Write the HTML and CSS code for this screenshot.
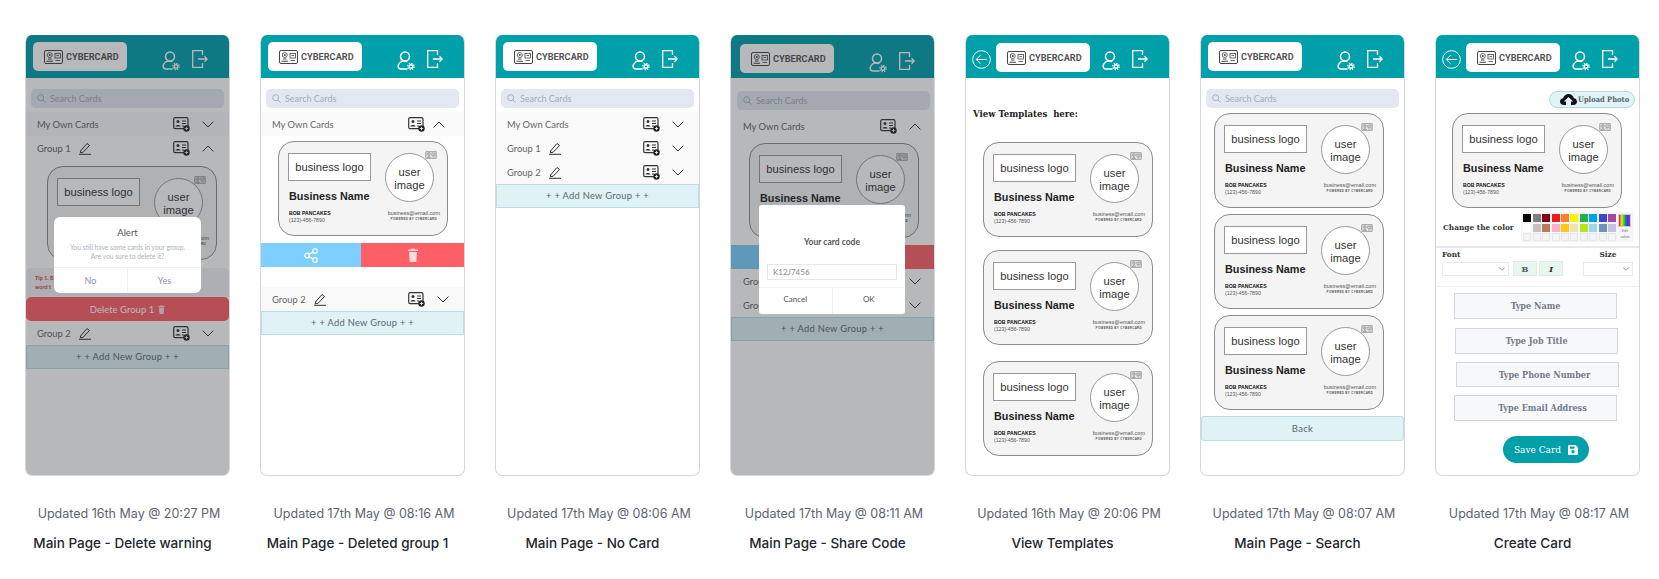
FILE: index.html
```html
<!DOCTYPE html>
<html lang="en">
<head>
    <meta charset="UTF-8">
    <meta name="viewport" content="width=device-width, initial-scale=1.0">
    <title>Cybercard screens</title>
    <link rel="stylesheet" href="styles.css">
</head>
<body>
    <!-- Shared icons -->
    <svg class="sprite" xmlns="http://www.w3.org/2000/svg">
        <symbol id="i-logo" viewBox="0 0 38 28">
            <rect x="1" y="1" width="36" height="26" rx="3" fill="none" stroke="#444" stroke-width="2"/>
            <circle cx="11.5" cy="10" r="5" fill="none" stroke="#444" stroke-width="1.6"/>
            <circle cx="11.5" cy="10" r="2" fill="#444"/>
            <path d="M8 18h7M5 22.500h13" stroke="#444" stroke-width="2" fill="none"/>
            <rect x="22" y="7" width="11" height="9" fill="none" stroke="#444" stroke-width="1.6"/>
            <path d="M25 11h5M23 21h9" stroke="#444" stroke-width="1.6" fill="none"/>
        </symbol>
        <symbol id="i-user" viewBox="0 0 18 20">
            <g fill="none" stroke="#fff" stroke-width="1.5">
                <circle cx="8" cy="5.500" r="4.500"/>
                <path d="M10.500 18H4C2 18 .8 16.500 1.200 14.500 1.800 11.800 4.500 10 7 10c1.300 0 2.400.2 3.300.7"/>
                <circle cx="14" cy="15.500" r="1.800" stroke-width="1.400"/>
                <circle cx="14" cy="15.500" r="3.200" stroke-width="1.300" stroke-dasharray="1.300 1.200"/>
            </g>
        </symbol>
        <symbol id="i-exit" viewBox="0 0 16 18">
            <g fill="none" stroke="#fff" stroke-width="1.300">
                <path d="M10.500 5V.7H.7v16.600h9.800V13"/>
                <path d="M6 9h9M12.500 6.300L15.200 9l-2.700 2.700"/>
            </g>
        </symbol>
        <symbol id="i-add-card" viewBox="0 0 17 15">
            <rect x=".7" y=".7" width="14.300" height="11" rx="1.500" fill="none" stroke="#333" stroke-width="1.200"/>
            <circle cx="5" cy="4.500" r="1.500" fill="#333"/>
            <path d="M2.500 9.500c0-2 5-2 5 0z" fill="#333"/>
            <path d="M9 4h4M9 6.500h4M9 9h2" stroke="#333" stroke-width="1"/>
            <circle cx="13.500" cy="11.500" r="3.200" fill="#222"/>
            <path d="M13.500 9.800v3.400M11.800 11.500h3.400" stroke="#fff" stroke-width=".8"/>
        </symbol>
        <symbol id="i-down" viewBox="0 0 12 7">
            <path d="M.6.600L6 6l5.400-5.400" fill="none" stroke="#333" stroke-width="1"/>
        </symbol>
        <symbol id="i-up" viewBox="0 0 12 7">
            <path d="M.6 6.400L6 1l5.400 5.400" fill="none" stroke="#333" stroke-width="1"/>
        </symbol>
        <symbol id="i-pencil" viewBox="0 0 12 13">
            <path d="M1.500 9L8 1.500l2.500 2L4.200 10.200 1.300 10.800z" fill="none" stroke="#333" stroke-width="1"/>
            <path d="M0 12.300h12" stroke="#333" stroke-width="1"/>
        </symbol>
        <symbol id="i-search" viewBox="0 0 9 9">
            <circle cx="3.700" cy="3.700" r="3" fill="none" stroke="#a3abb8" stroke-width=".9"/>
            <path d="M6 6l2.600 2.600" stroke="#a3abb8" stroke-width=".9"/>
        </symbol>
        <symbol id="i-share" viewBox="0 0 14 15">
            <g fill="none" stroke="#fff" stroke-width="1.200">
                <circle cx="11" cy="3" r="2.300"/>
                <circle cx="3" cy="7.500" r="2.300"/>
                <circle cx="11" cy="12" r="2.300"/>
                <path d="M5 6.400l4-2.300M5 8.600l4 2.300"/>
            </g>
        </symbol>
        <symbol id="i-trash" viewBox="0 0 10 14">
            <path d="M3.500 1.500V.5h3v1H10v1.500H0V1.500zM1 4h8l-.7 10H1.700z" fill="#ffd9dc"/>
        </symbol>
        <symbol id="i-back" viewBox="0 0 20 20">
            <g fill="none" stroke="#fff" stroke-width="1">
                <circle cx="10" cy="10" r="9.300"/>
                <path d="M15.500 10H4.500M9 5.500L4.500 10 9 14.500"/>
            </g>
        </symbol>
        <symbol id="i-cloud" viewBox="0 0 17 11">
            <path d="M4 11C1.500 11 0 9.500 0 7.500 0 5.500 1.500 4.300 3.200 4.200 3.800 1.700 6 0 8.500 0c2.700 0 4.800 1.800 5.300 4.200C15.700 4.400 17 5.800 17 7.700 17 9.600 15.500 11 13.500 11h-2.500V7.500h2.200L8.500 3 3.800 7.500H6V11z" fill="#111"/>
        </symbol>
        <symbol id="i-save" viewBox="0 0 10 10">
            <path d="M0 1a1 1 0 011-1h6.500L10 2.500V9a1 1 0 01-1 1H1a1 1 0 01-1-1zM2 1.500v2.200h4.500V1.500zM5 5a1.700 1.700 0 100 3.400A1.700 1.700 0 005 5z" fill="#fff" fill-rule="evenodd"/>
        </symbol>
    </svg>

    <main class="board">

        <!-- Main Page - Delete warning -->
        <section class="shot">
            <div class="phone">
                <header class="topbar">
                    <div class="brand"><svg class="brand-icon"><use href="#i-logo"/></svg><span>CYBERCARD</span></div>
                    <div class="top-icons top-icons-wide">
                        <svg class="icon-user"><use href="#i-user"/></svg>
                        <svg class="icon-exit"><use href="#i-exit"/></svg>
                    </div>
                </header>
                <div class="search"><svg class="icon-search"><use href="#i-search"/></svg>Search Cards</div>
                <div class="row row-shade">
                    <span>My Own Cards</span>
                    <svg class="icon-add"><use href="#i-add-card"/></svg>
                    <svg class="icon-chevron"><use href="#i-down"/></svg>
                </div>
                <div class="row">
                    <span>Group 1</span><svg class="icon-pencil"><use href="#i-pencil"/></svg>
                    <svg class="icon-add"><use href="#i-add-card"/></svg>
                    <svg class="icon-chevron"><use href="#i-up"/></svg>
                </div>
                <div class="card card-group">
                    <div class="card-qr"><svg><use href="#i-logo"/></svg></div>
                    <div class="card-top">
                        <div>
                            <div class="card-logo">business logo</div>
                            <div class="card-name">Business Name</div>
                        </div>
                        <div class="card-photo">user<br>image</div>
                    </div>
                    <div class="card-foot">
                        <div><b>BOB PANCAKES</b><br>(123)-456-7890</div>
                        <div class="card-foot-right">business@email.com<br><small>POWERED BY CYBERCARD</small></div>
                    </div>
                </div>
                <div class="tip">Tip 1. B<br>word t</div>
                <div class="delete-group">Delete Group 1 <svg class="icon-trash-small"><use href="#i-trash"/></svg></div>
                <div class="row">
                    <span>Group 2</span><svg class="icon-pencil"><use href="#i-pencil"/></svg>
                    <svg class="icon-add"><use href="#i-add-card"/></svg>
                    <svg class="icon-chevron"><use href="#i-down"/></svg>
                </div>
                <div class="add-group">+ + Add New Group + +</div>
                <div class="dim"></div>
                <div class="dialog dialog-alert">
                    <div class="dialog-body">
                        <h3>Alert</h3>
                        <p>You still have some cards in your group.<br>Are you sure to delete it?</p>
                    </div>
                    <div class="dialog-actions"><span>No</span><span>Yes</span></div>
                </div>
            </div>
            <p class="updated">Updated 16th May @ 20:27 PM</p>
            <p class="name">Main Page - Delete warning</p>
        </section>

        <!-- Main Page - Deleted group 1 -->
        <section class="shot">
            <div class="phone">
                <header class="topbar">
                    <div class="brand"><svg class="brand-icon"><use href="#i-logo"/></svg><span>CYBERCARD</span></div>
                    <div class="top-icons top-icons-wide">
                        <svg class="icon-user"><use href="#i-user"/></svg>
                        <svg class="icon-exit"><use href="#i-exit"/></svg>
                    </div>
                </header>
                <div class="search"><svg class="icon-search"><use href="#i-search"/></svg>Search Cards</div>
                <div class="row row-shade row-tight">
                    <span>My Own Cards</span>
                    <svg class="icon-add"><use href="#i-add-card"/></svg>
                    <svg class="icon-chevron"><use href="#i-up"/></svg>
                </div>
                <div class="card card-own">
                    <div class="card-qr"><svg><use href="#i-logo"/></svg></div>
                    <div class="card-top">
                        <div>
                            <div class="card-logo">business logo</div>
                            <div class="card-name">Business Name</div>
                        </div>
                        <div class="card-photo">user<br>image</div>
                    </div>
                    <div class="card-foot">
                        <div><b>BOB PANCAKES</b><br>(123)-456-7890</div>
                        <div class="card-foot-right">business@email.com<br><small>POWERED BY CYBERCARD</small></div>
                    </div>
                </div>
                <div class="card-actions">
                    <div class="action-share"><svg class="icon-share"><use href="#i-share"/></svg></div>
                    <div class="action-delete"><svg class="icon-trash"><use href="#i-trash"/></svg></div>
                </div>
                <div class="row row-shade row-spaced">
                    <span>Group 2</span><svg class="icon-pencil"><use href="#i-pencil"/></svg>
                    <svg class="icon-add"><use href="#i-add-card"/></svg>
                    <svg class="icon-chevron"><use href="#i-down"/></svg>
                </div>
                <div class="add-group">+ + Add New Group + +</div>
            </div>
            <p class="updated">Updated 17th May @ 08:16 AM</p>
            <p class="name">Main Page - Deleted group 1</p>
        </section>

        <!-- Main Page - No Card -->
        <section class="shot">
            <div class="phone">
                <header class="topbar">
                    <div class="brand"><svg class="brand-icon"><use href="#i-logo"/></svg><span>CYBERCARD</span></div>
                    <div class="top-icons top-icons-wide">
                        <svg class="icon-user"><use href="#i-user"/></svg>
                        <svg class="icon-exit"><use href="#i-exit"/></svg>
                    </div>
                </header>
                <div class="search"><svg class="icon-search"><use href="#i-search"/></svg>Search Cards</div>
                <div class="row row-shade">
                    <span>My Own Cards</span>
                    <svg class="icon-add"><use href="#i-add-card"/></svg>
                    <svg class="icon-chevron"><use href="#i-down"/></svg>
                </div>
                <div class="row row-shade">
                    <span>Group 1</span><svg class="icon-pencil"><use href="#i-pencil"/></svg>
                    <svg class="icon-add"><use href="#i-add-card"/></svg>
                    <svg class="icon-chevron"><use href="#i-down"/></svg>
                </div>
                <div class="row row-shade">
                    <span>Group 2</span><svg class="icon-pencil"><use href="#i-pencil"/></svg>
                    <svg class="icon-add"><use href="#i-add-card"/></svg>
                    <svg class="icon-chevron"><use href="#i-down"/></svg>
                </div>
                <div class="add-group">+ + Add New Group + +</div>
            </div>
            <p class="updated">Updated 17th May @ 08:06 AM</p>
            <p class="name">Main Page - No Card</p>
        </section>

        <!-- Main Page - Share Code -->
        <section class="shot">
            <div class="phone phone-share">
                <header class="topbar">
                    <div class="brand"><svg class="brand-icon"><use href="#i-logo"/></svg><span>CYBERCARD</span></div>
                    <div class="top-icons top-icons-wide">
                        <svg class="icon-user"><use href="#i-user"/></svg>
                        <svg class="icon-exit"><use href="#i-exit"/></svg>
                    </div>
                </header>
                <div class="search"><svg class="icon-search"><use href="#i-search"/></svg>Search Cards</div>
                <div class="row">
                    <span>My Own Cards</span>
                    <svg class="icon-add"><use href="#i-add-card"/></svg>
                    <svg class="icon-chevron"><use href="#i-up"/></svg>
                </div>
                <div class="card card-own">
                    <div class="card-qr"><svg><use href="#i-logo"/></svg></div>
                    <div class="card-top">
                        <div>
                            <div class="card-logo">business logo</div>
                            <div class="card-name">Business Name</div>
                        </div>
                        <div class="card-photo">user<br>image</div>
                    </div>
                    <div class="card-foot">
                        <div><b>BOB PANCAKES</b><br>(123)-456-7890</div>
                        <div class="card-foot-right">business@email.com<br><small>POWERED BY CYBERCARD</small></div>
                    </div>
                </div>
                <div class="card-actions">
                    <div class="action-share"><svg class="icon-share"><use href="#i-share"/></svg></div>
                    <div class="action-delete"><svg class="icon-trash"><use href="#i-trash"/></svg></div>
                </div>
                <div class="row">
                    <span>Group 1</span><svg class="icon-pencil"><use href="#i-pencil"/></svg>
                    <svg class="icon-add"><use href="#i-add-card"/></svg>
                    <svg class="icon-chevron"><use href="#i-down"/></svg>
                </div>
                <div class="row">
                    <span>Group 2</span><svg class="icon-pencil"><use href="#i-pencil"/></svg>
                    <svg class="icon-add"><use href="#i-add-card"/></svg>
                    <svg class="icon-chevron"><use href="#i-down"/></svg>
                </div>
                <div class="add-group">+ + Add New Group + +</div>
                <div class="dim"></div>
                <div class="dialog dialog-code">
                    <div class="dialog-body">
                        <h4>Your card code</h4>
                        <div class="code-field">K12J7456</div>
                    </div>
                    <div class="dialog-actions"><span>Cancel</span><span>OK</span></div>
                </div>
            </div>
            <p class="updated">Updated 17th May @ 08:11 AM</p>
            <p class="name">Main Page - Share Code</p>
        </section>

        <!-- View Templates -->
        <section class="shot">
            <div class="phone">
                <header class="topbar">
                    <svg class="icon-back"><use href="#i-back"/></svg>
                    <div class="brand"><svg class="brand-icon"><use href="#i-logo"/></svg><span>CYBERCARD</span></div>
                    <div class="top-icons">
                        <svg class="icon-user"><use href="#i-user"/></svg>
                        <svg class="icon-exit"><use href="#i-exit"/></svg>
                    </div>
                </header>
                <h2 class="templates-title">View Templates&nbsp; here:</h2>
                <div class="template-list">
                    <div class="card">
                        <div class="card-qr"><svg><use href="#i-logo"/></svg></div>
                        <div class="card-top">
                            <div>
                                <div class="card-logo">business logo</div>
                                <div class="card-name">Business Name</div>
                            </div>
                            <div class="card-photo">user<br>image</div>
                        </div>
                        <div class="card-foot">
                            <div><b>BOB PANCAKES</b><br>(123)-456-7890</div>
                            <div class="card-foot-right">business@email.com<br><small>POWERED BY CYBERCARD</small></div>
                        </div>
                    </div>
                    <div class="card">
                        <div class="card-qr"><svg><use href="#i-logo"/></svg></div>
                        <div class="card-top">
                            <div>
                                <div class="card-logo">business logo</div>
                                <div class="card-name">Business Name</div>
                            </div>
                            <div class="card-photo">user<br>image</div>
                        </div>
                        <div class="card-foot">
                            <div><b>BOB PANCAKES</b><br>(123)-456-7890</div>
                            <div class="card-foot-right">business@email.com<br><small>POWERED BY CYBERCARD</small></div>
                        </div>
                    </div>
                    <div class="card">
                        <div class="card-qr"><svg><use href="#i-logo"/></svg></div>
                        <div class="card-top">
                            <div>
                                <div class="card-logo">business logo</div>
                                <div class="card-name">Business Name</div>
                            </div>
                            <div class="card-photo">user<br>image</div>
                        </div>
                        <div class="card-foot">
                            <div><b>BOB PANCAKES</b><br>(123)-456-7890</div>
                            <div class="card-foot-right">business@email.com<br><small>POWERED BY CYBERCARD</small></div>
                        </div>
                    </div>
                </div>
            </div>
            <p class="updated">Updated 16th May @ 20:06 PM</p>
            <p class="name">View Templates</p>
        </section>

        <!-- Main Page - Search -->
        <section class="shot">
            <div class="phone">
                <header class="topbar">
                    <div class="brand"><svg class="brand-icon"><use href="#i-logo"/></svg><span>CYBERCARD</span></div>
                    <div class="top-icons top-icons-wide">
                        <svg class="icon-user"><use href="#i-user"/></svg>
                        <svg class="icon-exit"><use href="#i-exit"/></svg>
                    </div>
                </header>
                <div class="search search-results"><svg class="icon-search"><use href="#i-search"/></svg>Search Cards</div>
                <div class="result-list">
                    <div class="card">
                        <div class="card-qr"><svg><use href="#i-logo"/></svg></div>
                        <div class="card-top">
                            <div>
                                <div class="card-logo">business logo</div>
                                <div class="card-name">Business Name</div>
                            </div>
                            <div class="card-photo">user<br>image</div>
                        </div>
                        <div class="card-foot">
                            <div><b>BOB PANCAKES</b><br>(123)-456-7890</div>
                            <div class="card-foot-right">business@email.com<br><small>POWERED BY CYBERCARD</small></div>
                        </div>
                    </div>
                    <div class="card">
                        <div class="card-qr"><svg><use href="#i-logo"/></svg></div>
                        <div class="card-top">
                            <div>
                                <div class="card-logo">business logo</div>
                                <div class="card-name">Business Name</div>
                            </div>
                            <div class="card-photo">user<br>image</div>
                        </div>
                        <div class="card-foot">
                            <div><b>BOB PANCAKES</b><br>(123)-456-7890</div>
                            <div class="card-foot-right">business@email.com<br><small>POWERED BY CYBERCARD</small></div>
                        </div>
                    </div>
                    <div class="card">
                        <div class="card-qr"><svg><use href="#i-logo"/></svg></div>
                        <div class="card-top">
                            <div>
                                <div class="card-logo">business logo</div>
                                <div class="card-name">Business Name</div>
                            </div>
                            <div class="card-photo">user<br>image</div>
                        </div>
                        <div class="card-foot">
                            <div><b>BOB PANCAKES</b><br>(123)-456-7890</div>
                            <div class="card-foot-right">business@email.com<br><small>POWERED BY CYBERCARD</small></div>
                        </div>
                    </div>
                </div>
                <div class="back-btn">Back</div>
            </div>
            <p class="updated">Updated 17th May @ 08:07 AM</p>
            <p class="name">Main Page - Search</p>
        </section>

        <!-- Create Card -->
        <section class="shot">
            <div class="phone">
                <header class="topbar">
                    <svg class="icon-back"><use href="#i-back"/></svg>
                    <div class="brand"><svg class="brand-icon"><use href="#i-logo"/></svg><span>CYBERCARD</span></div>
                    <div class="top-icons">
                        <svg class="icon-user"><use href="#i-user"/></svg>
                        <svg class="icon-exit"><use href="#i-exit"/></svg>
                    </div>
                </header>
                <div class="upload-wrap">
                    <div class="upload"><svg class="icon-cloud"><use href="#i-cloud"/></svg>Upload Photo</div>
                </div>
                <div class="card card-create">
                    <div class="card-qr"><svg><use href="#i-logo"/></svg></div>
                    <div class="card-top">
                        <div>
                            <div class="card-logo">business logo</div>
                            <div class="card-name">Business Name</div>
                        </div>
                        <div class="card-photo">user<br>image</div>
                    </div>
                    <div class="card-foot">
                        <div><b>BOB PANCAKES</b><br>(123)-456-7890</div>
                        <div class="card-foot-right">business@email.com<br><small>POWERED BY CYBERCARD</small></div>
                    </div>
                </div>
                <div class="color-row">
                    <span class="slab-label">Change the color</span>
                    <div class="palette">
                        <div class="swatches">
                            <span></span><span></span><span></span><span></span><span></span><span></span><span></span><span></span><span></span><span></span>
                            <span></span><span></span><span></span><span></span><span></span><span></span><span></span><span></span><span></span><span></span>
                            <span></span><span></span><span></span><span></span><span></span><span></span><span></span><span></span><span></span><span></span>
                        </div>
                        <div class="edit-colors"><i></i>Edit<br>colors</div>
                    </div>
                </div>
                <div class="font-row">
                    <div class="font-col">
                        <span class="slab-label">Font</span>
                        <div class="select select-font"><svg class="icon-select"><use href="#i-down"/></svg></div>
                    </div>
                    <div class="style-btn">B</div>
                    <div class="style-btn style-btn-italic">I</div>
                    <div class="font-col font-col-size">
                        <span class="slab-label">Size</span>
                        <div class="select select-size"><svg class="icon-select"><use href="#i-down"/></svg></div>
                    </div>
                </div>
                <div class="field field-name">Type Name</div>
                <div class="field field-job">Type Job Title</div>
                <div class="field field-phone">Type Phone Number</div>
                <div class="field field-email">Type Email Address</div>
                <div class="save-btn">Save Card <svg class="icon-save"><use href="#i-save"/></svg></div>
            </div>
            <p class="updated">Updated 17th May @ 08:17 AM</p>
            <p class="name">Create Card</p>
        </section>

    </main>
</body>
</html>
```

FILE: styles.css
```css
* {
    box-sizing: border-box;
}
html, body {
    height: 100%;
    overflow: hidden;
}
body {
    margin: 0;
    background-color: #fff;
    font-family: 'Lato', sans-serif;
    color: #333;
}
.sprite {
    position: absolute;
    width: 0;
    height: 0;
}
.board {
    display: flex;
    gap: 32px;
    padding: 35px 0 0 26px;
}
.shot {
    width: 203px;
    flex: none;
}
.phone {
    position: relative;
    height: 441px;
    border: 1px solid #d6d8dc;
    border-top: 0;
    border-radius: 7px;
    overflow: hidden;
    background-color: #fff;
    margin: 0 -1px;
}

/* Top bar */
.topbar {
    display: flex;
    align-items: flex-start;
    height: 43px;
    padding: 7px 0 0 7px;
    background-color: #00a0ab;
}
.brand {
    display: flex;
    align-items: center;
    width: 94px;
    height: 29px;
    padding-left: 11px;
    background-color: #fff;
    border-radius: 5px;
    font-family: 'Roboto', sans-serif;
    font-size: 9.200px;
    font-weight: 700;
    color: #555;
}
.brand-icon {
    width: 19px;
    height: 14px;
    margin-right: 3px;
    flex: none;
}
.top-icons {
    display: flex;
    align-items: flex-start;
    gap: 12px;
    margin-left: 12px;
    padding-top: 8px;
}
.top-icons-wide {
    margin-left: 35px;
}
.icon-user {
    width: 18px;
    height: 20px;
    margin-top: 1px;
}
.icon-exit {
    width: 16px;
    height: 18px;
}
.icon-back {
    width: 19px;
    height: 19px;
    margin: 8px 5px 0 0;
    flex: none;
}
.topbar:has(.icon-back) {
    padding-left: 6px;
}
.topbar:has(.icon-back) .brand {
    margin-top: 1px;
}

/* Search and group rows */
.search {
    display: flex;
    align-items: center;
    height: 19px;
    margin: 11px 5px 4px;
    padding-left: 6px;
    background-color: #e3e7f1;
    border-radius: 5px;
    font-size: 9px;
    color: #a5adba;
}
.icon-search {
    width: 9px;
    height: 9px;
    margin-right: 4px;
}
.row {
    display: flex;
    align-items: center;
    height: 24px;
    padding: 0 15px 0 11px;
    font-size: 9.400px;
    color: #666;
}
.row-shade {
    background-color: #f9f9fa;
}
.row-spaced {
    margin-top: 20px;
}
.icon-add {
    width: 17px;
    height: 15px;
    margin: 0 12px 0 auto;
}
.icon-chevron {
    width: 12px;
    height: 7px;
}
.row-tight .icon-chevron {
    margin: 0 4px 0 -4px;
}
.icon-pencil {
    width: 12px;
    height: 13px;
    margin-left: 8px;
}
.add-group {
    height: 24px;
    line-height: 22px;
    text-align: center;
    background-color: #dff2f5;
    border: 1px solid #bfdbe3;
    font-size: 9.300px;
    letter-spacing: .3px;
    color: #5e6670;
}

/* Business card */
.card {
    position: relative;
    width: 170px;
    height: 95px;
    padding: 11px 7px 0 9px;
    background-color: #f4f4f4;
    border: 1px solid #8c8c8c;
    border-radius: 16px;
    font-family: 'Liberation Sans', Arial, sans-serif;
    color: #222;
}
.card-group {
    margin: 6px 0 0 21px;
    height: 94px;
}
.card-group .card-name {
    margin-top: 11px;
}
.card-own {
    margin: 5px 0 0 17px;
}
.card-create {
    margin: 5px 0 0 16px;
}
.card-top {
    display: flex;
    gap: 14px;
}
.card-logo {
    width: 83px;
    height: 28px;
    line-height: 26px;
    text-align: center;
    background-color: #fff;
    border: 1px solid #999;
    font-size: 11.200px;
    color: #333;
}
.card-name {
    margin: 9px 0 0 1px;
    font-size: 10.800px;
    font-weight: 700;
    line-height: 13px;
    white-space: nowrap;
}
.card-photo {
    flex: none;
    width: 49px;
    height: 49px;
    padding-top: 12px;
    border: 1px solid #999;
    border-radius: 50%;
    background-color: #fff;
    text-align: center;
    font-size: 11.200px;
    line-height: 13px;
    color: #333;
}
.card-qr {
    position: absolute;
    top: 9px;
    left: 146px;
    display: flex;
    width: 12px;
    height: 8px;
    background-color: #ddd;
    opacity: .75;
}
.card-qr svg {
    width: 12px;
    height: 8px;
}
.card-foot {
    display: flex;
    justify-content: space-between;
    margin: 7px 0 0 1px;
    font-size: 5.200px;
    line-height: 7px;
    color: #555;
}
.card-group .card-foot {
    margin-top: 5px;
}
.card-foot b {
    color: #111;
}
.card-foot-right {
    text-align: center;
    font-size: 5.500px;
}
.card-foot-right small {
    display: block;
    margin-top: -1px;
    font-size: 3px;
    font-weight: 700;
    letter-spacing: .3px;
    white-space: nowrap;
}
.card-actions {
    display: flex;
    height: 24px;
    margin-top: 7px;
}
.action-share, .action-delete {
    display: flex;
    align-items: center;
    justify-content: center;
}
.action-share {
    width: 100px;
    background-color: #7dcfff;
}
.action-delete {
    flex: 1;
    background-color: #ff5f66;
}
.icon-share {
    width: 14px;
    height: 15px;
}
.icon-trash {
    width: 10px;
    height: 14px;
}

/* Delete warning screen */
.tip {
    height: 29px;
    margin-top: 8px;
    padding: 6px 9px 0;
    background-color: #f1f1f3;
    border-radius: 5px 5px 0 0;
    font-size: 5.500px;
    font-weight: 700;
    line-height: 9px;
    color: #e03c3c;
}
.delete-group {
    display: flex;
    align-items: center;
    justify-content: center;
    gap: 4px;
    height: 24px;
    background-color: #ff5f66;
    border-radius: 5px;
    font-size: 9.500px;
    color: #fff;
}
.icon-trash-small {
    width: 7px;
    height: 9px;
}

/* Overlay and dialogs */
.dim {
    position: absolute;
    inset: 0;
    background-color: rgba(40, 46, 54, .34);
}
.dialog {
    position: absolute;
    display: flex;
    flex-direction: column;
    background-color: #fff;
    border-radius: 6px;
    overflow: hidden;
}
.dialog-alert {
    left: 28px;
    top: 182px;
    width: 147px;
    height: 76px;
}
.dialog-code {
    left: 28px;
    top: 170px;
    width: 146px;
    height: 109px;
    border-radius: 3px;
}
.dialog-body {
    flex: 1;
    text-align: center;
}
.dialog-body h3 {
    margin: 10px 0 5px;
    font-size: 9.500px;
    font-weight: 400;
    color: #555;
}
.dialog-body p {
    margin: 0;
    font-size: 6.700px;
    line-height: 8.500px;
    color: #aab2bd;
}
.dialog-body h4 {
    margin: 32px 0 17px;
    font-size: 8.500px;
    font-weight: 700;
    color: #555;
}
.code-field {
    height: 16px;
    margin: 0 8px;
    padding-left: 5px;
    line-height: 15px;
    text-align: left;
    border: 1px solid #e3e6ea;
    font-size: 8px;
    color: #7f8792;
}
.dialog-actions {
    display: flex;
    height: 26px;
    border-top: 1px solid #eef0f2;
    font-size: 9px;
}
.dialog-alert .dialog-actions span {
    color: #8793a3;
}
.dialog-actions span {
    flex: 1;
    line-height: 25px;
    text-align: center;
    color: #555;
}
.dialog-actions span + span {
    border-left: 1px solid #eef0f2;
}
.phone-share .dialog-actions {
    height: 27px;
    font-size: 8px;
}
.phone-share .dialog-actions span {
    line-height: 22px;
}

/* Share screen sits two pixels lower */
.phone-share .topbar {
    padding: 9px 0 0 9px;
}
.phone-share .top-icons {
    padding-top: 8px;
}
.phone-share .search {
    margin: 13px 4px 4px 6px;
}
.phone-share .row {
    padding: 0 13px 0 12px;
}
.phone-share .card-own {
    margin-left: 18px;
}

/* Templates and search results */
.templates-title {
    margin: 29px 0 21px 7px;
    font-family: 'DejaVu Serif Condensed', 'DejaVu Serif', serif;
    font-size: 9.500px;
    line-height: 14px;
    color: #222;
}
.template-list {
    display: flex;
    flex-direction: column;
    gap: 13px;
    padding-left: 17px;
}
.template-list .card:last-child {
    margin-top: 3px;
}
.search-results {
    margin-bottom: 0;
}
.result-list {
    display: flex;
    flex-direction: column;
    gap: 6px;
    padding: 5px 0 0 13px;
}
.back-btn {
    height: 25px;
    margin-top: 6px;
    line-height: 23px;
    text-align: center;
    background-color: #dff2f5;
    border: 1px solid #bfdbe3;
    border-radius: 3px;
    font-size: 9.500px;
    letter-spacing: .3px;
    color: #5e6670;
}

/* Create card form */
.upload-wrap {
    display: flex;
    justify-content: flex-end;
    padding: 13px 4px 0 0;
}
.upload {
    display: flex;
    align-items: center;
    width: 86px;
    height: 17px;
    padding-left: 10px;
    background-color: #e0f3f5;
    border: 1px solid #b9d7de;
    border-radius: 9px;
    font-family: 'DejaVu Serif Condensed', serif;
    font-size: 7.500px;
    font-weight: 700;
    color: #5a626c;
    white-space: nowrap;
}
.icon-cloud {
    width: 17px;
    height: 11px;
    margin-right: 1px;
    flex: none;
}
.slab-label {
    font-family: 'DejaVu Serif Condensed', serif;
    font-size: 8.200px;
    font-weight: 700;
    color: #333;
}
.color-row {
    display: flex;
    align-items: center;
    justify-content: space-between;
    height: 40px;
    padding: 0 5px 0 7px;
    border-bottom: 2px solid #e6e8ee;
}
.palette {
    display: flex;
    gap: 2px;
    padding: 2px 2px 1px 2px;
    background-color: #f5f6f8;
}
.swatches {
    display: grid;
    grid-template-columns: repeat(10, 8px);
    grid-auto-rows: 8px;
    gap: 1.400px;
}
.swatches span {
    background-color: #f3f4f6;
    border: 1px solid #e6e7ea;
}
.swatches span:nth-child(1) { background-color: #000; border: 0; }
.swatches span:nth-child(2) { background-color: #7f7f7f; border: 0; }
.swatches span:nth-child(3) { background-color: #880015; border: 0; }
.swatches span:nth-child(4) { background-color: #ed1c24; border: 0; }
.swatches span:nth-child(5) { background-color: #ff7f27; border: 0; }
.swatches span:nth-child(6) { background-color: #fff200; border: 0; }
.swatches span:nth-child(7) { background-color: #22b14c; border: 0; }
.swatches span:nth-child(8) { background-color: #00a2e8; border: 0; }
.swatches span:nth-child(9) { background-color: #3f48cc; border: 0; }
.swatches span:nth-child(10) { background-color: #a349a4; border: 0; }
.swatches span:nth-child(11) { background-color: #fff; border: 0; }
.swatches span:nth-child(12) { background-color: #c3c3c3; border: 0; }
.swatches span:nth-child(13) { background-color: #b97a57; border: 0; }
.swatches span:nth-child(14) { background-color: #ffaec9; border: 0; }
.swatches span:nth-child(15) { background-color: #ffc90e; border: 0; }
.swatches span:nth-child(16) { background-color: #efe4b0; border: 0; }
.swatches span:nth-child(17) { background-color: #b5e61d; border: 0; }
.swatches span:nth-child(18) { background-color: #99d9ea; border: 0; }
.swatches span:nth-child(19) { background-color: #7092be; border: 0; }
.swatches span:nth-child(20) { background-color: #c8bfe7; border: 0; }
.edit-colors {
    width: 14px;
    text-align: center;
    font-size: 3.500px;
    line-height: 6px;
    color: #777;
}
.edit-colors i {
    display: block;
    width: 13px;
    height: 13px;
    margin-bottom: 1px;
    border: 1px solid #ccc;
    background: linear-gradient(90deg, #e02020, #f0e020, #20c040, #2040e0, #c020c0);
}
.font-row {
    display: flex;
    align-items: flex-end;
    height: 39px;
    padding: 0 6px 10px 6px;
    border-bottom: 1px solid #eceef2;
}
.font-col {
    display: flex;
    flex-direction: column;
    gap: 3px;
}
.font-col-size {
    align-items: center;
    margin-left: auto;
}
.select {
    display: flex;
    align-items: center;
    justify-content: flex-end;
    height: 14px;
    padding-right: 3px;
    border: 1px solid #e8eaee;
    background-color: #fff;
}
.select-font {
    width: 67px;
}
.select-size {
    width: 50px;
}
.icon-select {
    width: 6px;
    height: 4px;
}
.style-btn {
    width: 24px;
    height: 15px;
    margin-left: 2px;
    line-height: 15px;
    text-align: center;
    background-color: #e8f6ef;
    border: 1px solid #e0ece6;
    font-family: 'DejaVu Serif', serif;
    font-size: 8px;
    font-weight: 700;
    color: #555;
}
.font-col + .style-btn {
    margin-left: 4px;
}
.style-btn-italic {
    font-style: italic;
    color: #222;
}
.field {
    width: 163px;
    height: 26px;
    margin-left: 18px;
    line-height: 25px;
    text-align: center;
    background-color: #f7f8fa;
    border: 1px solid #d3d7e0;
    font-family: 'DejaVu Serif Condensed', serif;
    font-size: 9px;
    font-weight: 700;
    color: #737b88;
}
.field-name {
    margin-top: 6px;
}
.field-job {
    margin: 9px 0 0 19px;
}
.field-phone {
    margin: 8px 0 0 20px;
    height: 25px;
    padding-left: 14px;
}
.field-email {
    margin-top: 8px;
    padding-left: 14px;
}
.save-btn {
    display: flex;
    align-items: center;
    justify-content: center;
    gap: 7px;
    width: 86px;
    height: 27px;
    margin: 15px 0 0 67px;
    background-color: #00a0ab;
    border-radius: 14px;
    font-family: 'DejaVu Serif Condensed', serif;
    font-size: 10px;
    color: #fff;
}
.icon-save {
    width: 10px;
    height: 10px;
}

/* Captions */
.updated {
    margin: 30px 0 0;
    padding-left: 3px;
    text-align: center;
    font-family: 'Inter', sans-serif;
    font-size: 12.500px;
    line-height: 16px;
    white-space: nowrap;
    color: #5c6470;
}
.name {
    margin: 13px 0 0;
    padding-right: 10px;
    text-align: center;
    font-family: 'Inter', sans-serif;
    font-size: 13.500px;
    font-weight: 500;
    line-height: 16px;
    white-space: nowrap;
    color: #23272e;
}
```
